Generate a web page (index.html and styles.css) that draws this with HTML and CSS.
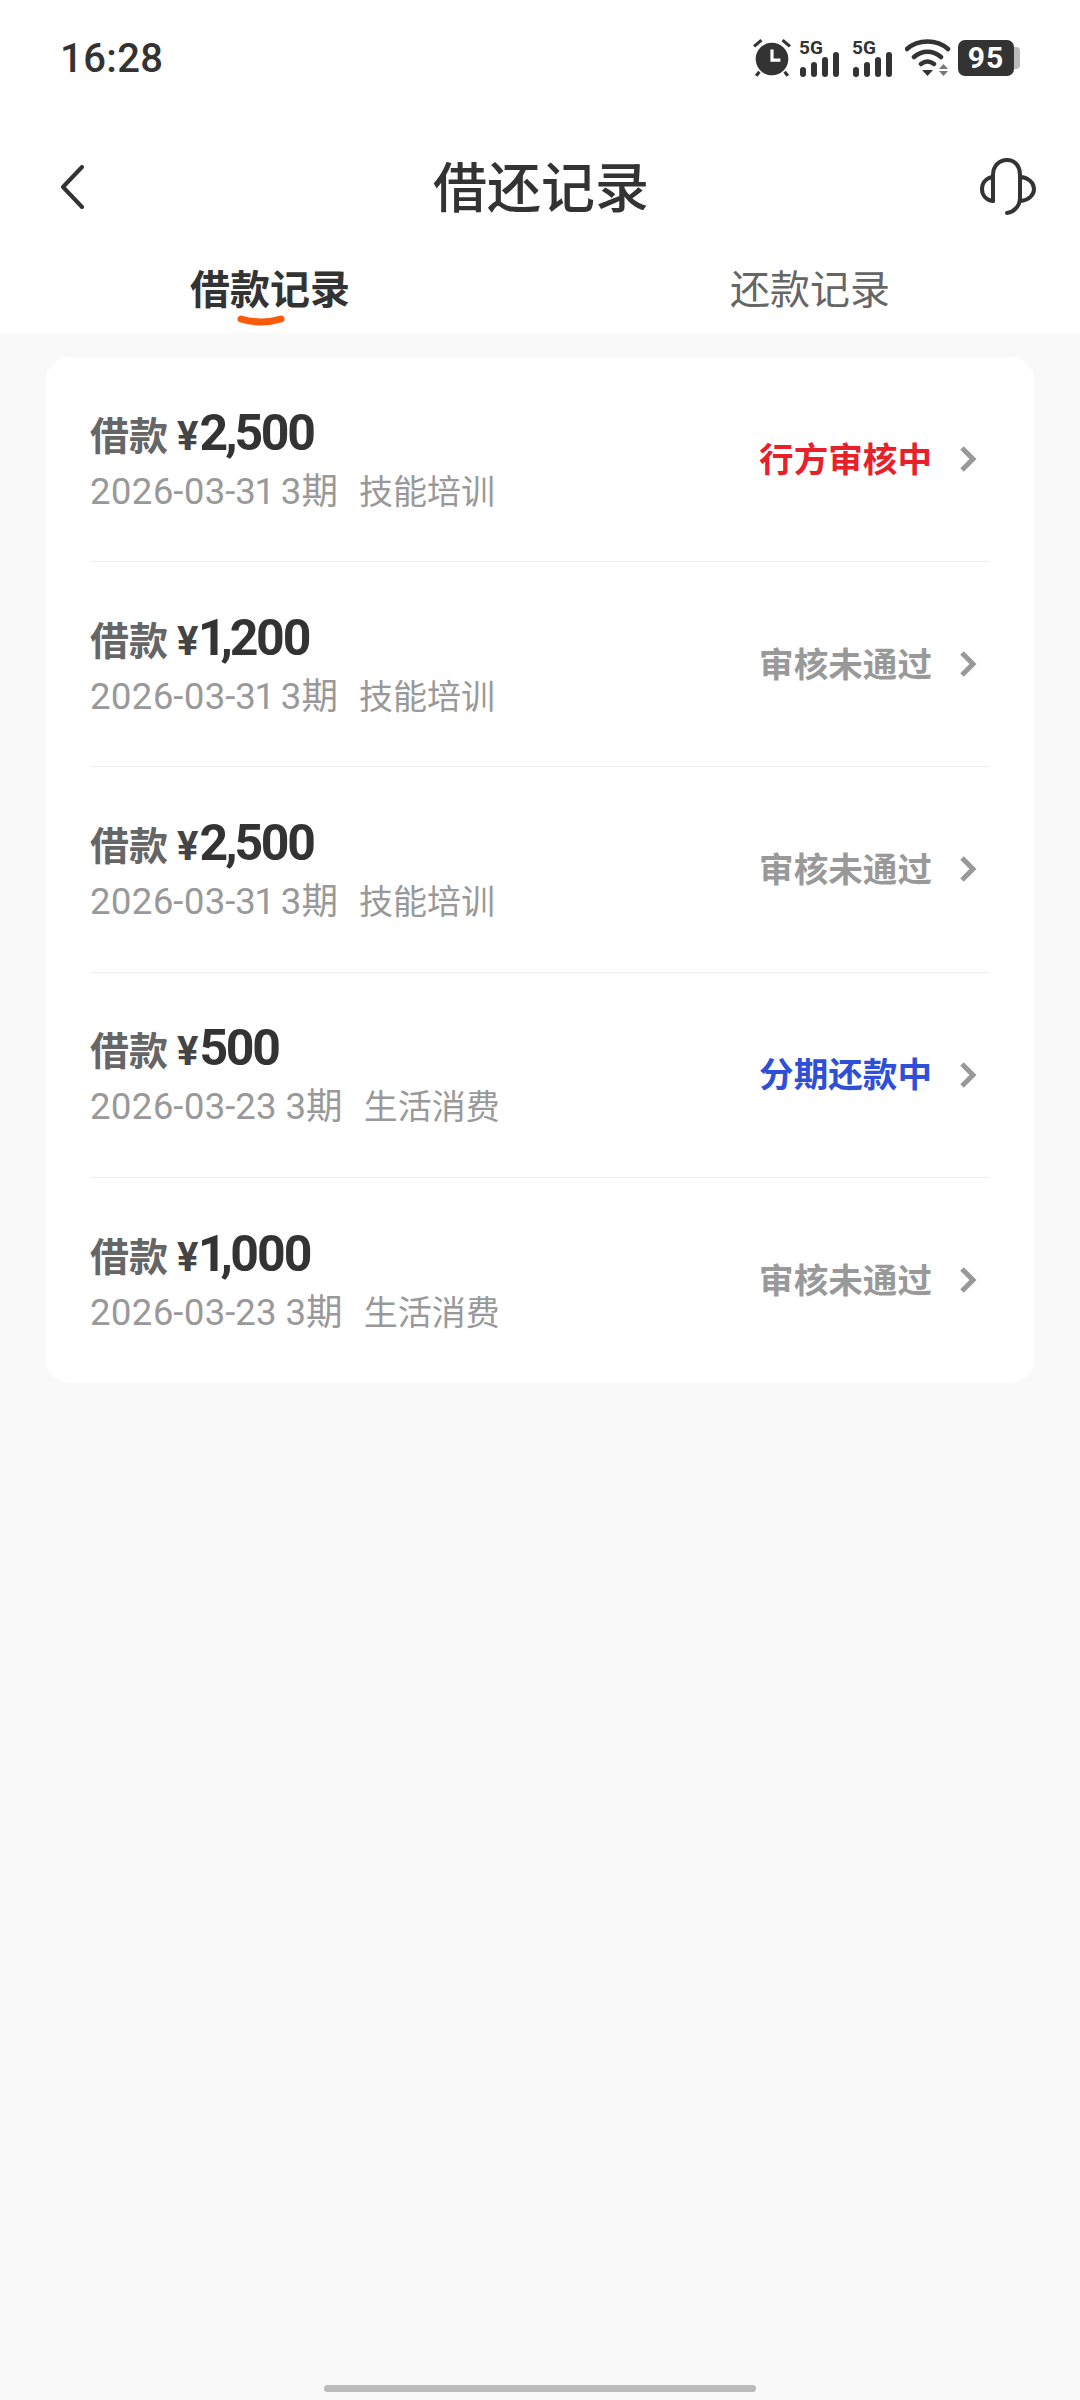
FILE: index.html
```html
<!DOCTYPE html>
<html lang="zh-CN">
<head>
    <meta charset="UTF-8">
    <meta name="viewport" content="width=device-width, initial-scale=1.0">
    <title>借还记录</title>
    <link rel="stylesheet" href="styles.css">
</head>
<body>
    <div class="top">
        <div class="statusbar">
            <span class="time">16:28</span>
            <div class="status-icons">
                <svg class="ic-alarm" width="40" height="40" viewBox="0 0 38 38">
                    <circle cx="19" cy="20" r="15.5" fill="#333"/>
                    <path d="M19 11v10h8" fill="none" stroke="#fff" stroke-width="3"/>
                    <path d="M2 8l7-6M36 8l-7-6M7 32l-3 4M31 32l3 4" stroke="#333" stroke-width="3" fill="none"/>
                </svg>
                <div class="sig">
                    <span class="sig-label">5G</span>
                    <svg width="42" height="25" viewBox="0 0 42 25">
                        <rect x="1" y="15" width="6" height="10" rx="3" fill="#333"/>
                        <rect x="12" y="10" width="6" height="15" rx="3" fill="#333"/>
                        <rect x="23" y="5" width="6" height="20" rx="3" fill="#333"/>
                        <rect x="34" y="0" width="6" height="25" rx="3" fill="#333"/>
                    </svg>
                </div>
                <div class="sig">
                    <span class="sig-label">5G</span>
                    <svg width="42" height="25" viewBox="0 0 42 25">
                        <rect x="1" y="15" width="6" height="10" rx="3" fill="#333"/>
                        <rect x="12" y="10" width="6" height="15" rx="3" fill="#333"/>
                        <rect x="23" y="5" width="6" height="20" rx="3" fill="#333"/>
                        <rect x="34" y="0" width="6" height="25" rx="3" fill="#333"/>
                    </svg>
                </div>
                <svg width="46" height="38" viewBox="0 0 46 38">
                    <path d="M2 10C13 0 32 0 43 10M9 18C17 11 28 11 36 18M16 25C20 22 25 22 29 25" fill="none" stroke="#333" stroke-width="4.5" stroke-linecap="round"/>
                    <path d="M17 31h11l-5.500 6z" fill="#333"/>
                    <path d="M34 30l4.500-5 4.500 5zM34 32h9l-4.500 5z" fill="#777"/>
                </svg>
                <div class="battery">
                    <span class="battery-num">95</span>
                    <span class="battery-cap"></span>
                </div>
            </div>
        </div>

        <div class="navbar">
            <svg class="nav-back" width="26" height="44" viewBox="0 0 26 44">
                <path d="M22 2L3 22l19 20" fill="none" stroke="#333" stroke-width="4" stroke-linecap="round" stroke-linejoin="round"/>
            </svg>
            <h1 class="nav-title">借还记录</h1>
            <svg class="nav-help" width="56" height="58" viewBox="0 0 56 58">
                <path d="M13 43V17C13 8 19 2 27 2s13 6 13 15v23c0 8-6 14-13 15" fill="none" stroke="#333" stroke-width="4" stroke-linecap="round"/>
                <path d="M13 19C6 20 2 25 2 31s4 11 11 12zM41 19c8 1 13 6 13 12s-5 11-13 12" fill="none" stroke="#333" stroke-width="4" stroke-linejoin="round"/>
            </svg>
        </div>

        <div class="tabs">
            <div class="tab tab-active">
                借款记录
                <svg class="tab-mark" width="48" height="12" viewBox="0 0 48 12">
                    <path d="M4 4Q24 10 44 4" fill="none" stroke="#fa5a0a" stroke-width="7" stroke-linecap="round"/>
                </svg>
            </div>
            <div class="tab">还款记录</div>
        </div>
    </div>

    <div class="content">
        <div class="card">
            <div class="row">
                <div class="row-info">
                    <div class="amount"><span class="amount-label">借款</span><span class="amount-sign">¥</span><span class="amount-num">2,500</span></div>
                    <div class="meta"><span class="meta-date">2026-03-31 3期</span><span>技能培训</span></div>
                </div>
                <span class="state state-red">行方审核中</span>
                <svg class="chevron" width="18" height="28" viewBox="0 0 18 28"><path d="M3 3l11 11L3 25" fill="none" stroke="#999" stroke-width="5"/></svg>
            </div>
            <div class="row">
                <div class="row-info">
                    <div class="amount"><span class="amount-label">借款</span><span class="amount-sign">¥</span><span class="amount-num">1,200</span></div>
                    <div class="meta"><span class="meta-date">2026-03-31 3期</span><span>技能培训</span></div>
                </div>
                <span class="state">审核未通过</span>
                <svg class="chevron" width="18" height="28" viewBox="0 0 18 28"><path d="M3 3l11 11L3 25" fill="none" stroke="#999" stroke-width="5"/></svg>
            </div>
            <div class="row">
                <div class="row-info">
                    <div class="amount"><span class="amount-label">借款</span><span class="amount-sign">¥</span><span class="amount-num">2,500</span></div>
                    <div class="meta"><span class="meta-date">2026-03-31 3期</span><span>技能培训</span></div>
                </div>
                <span class="state">审核未通过</span>
                <svg class="chevron" width="18" height="28" viewBox="0 0 18 28"><path d="M3 3l11 11L3 25" fill="none" stroke="#999" stroke-width="5"/></svg>
            </div>
            <div class="row">
                <div class="row-info">
                    <div class="amount"><span class="amount-label">借款</span><span class="amount-sign">¥</span><span class="amount-num">500</span></div>
                    <div class="meta"><span class="meta-date">2026-03-23 3期</span><span>生活消费</span></div>
                </div>
                <span class="state state-blue">分期还款中</span>
                <svg class="chevron" width="18" height="28" viewBox="0 0 18 28"><path d="M3 3l11 11L3 25" fill="none" stroke="#999" stroke-width="5"/></svg>
            </div>
            <div class="row">
                <div class="row-info">
                    <div class="amount"><span class="amount-label">借款</span><span class="amount-sign">¥</span><span class="amount-num">1,000</span></div>
                    <div class="meta"><span class="meta-date">2026-03-23 3期</span><span>生活消费</span></div>
                </div>
                <span class="state">审核未通过</span>
                <svg class="chevron" width="18" height="28" viewBox="0 0 18 28"><path d="M3 3l11 11L3 25" fill="none" stroke="#999" stroke-width="5"/></svg>
            </div>
        </div>
        <div class="home-bar"></div>
    </div>
</body>
</html>
```

FILE: styles.css
```css
* {
    box-sizing: border-box;
}
body {
    margin: 0;
    width: 1080px;
    height: 2400px;
    display: flex;
    flex-direction: column;
    background-color: #f9f9f9;
    color: #333;
    font-family: Roboto, "Noto Sans CJK SC", sans-serif;
    overflow: hidden;
}
.top {
    height: 333px;
    background-color: #fff;
}
.statusbar {
    height: 114px;
    padding: 2px 60px 0 60px;
    display: flex;
    align-items: center;
    justify-content: space-between;
}
.time {
    font-size: 40px;
    font-weight: 500;
    letter-spacing: 0.4px;
}
.status-icons {
    display: flex;
    align-items: center;
    gap: 6px;
}
.ic-alarm {
    margin-right: 1px;
}
.sig {
    width: 47px;
    display: flex;
    flex-direction: column;
    align-items: flex-start;
}
.sig svg {
    display: block;
    margin-top: -5px;
}
.sig-label {
    font-size: 19px;
    font-weight: 700;
    line-height: 18px;
}
.battery {
    display: flex;
    align-items: center;
    margin-left: 1px;
}
.battery-num {
    width: 56px;
    height: 36px;
    background-color: #333;
    border-radius: 7px;
    color: #fff;
    font-size: 30px;
    font-weight: 700;
    line-height: 36px;
    text-align: center;
    letter-spacing: 1px;
}
.battery-cap {
    width: 6px;
    height: 22px;
    background-color: #bbb;
    border-radius: 0 4px 4px 0;
}
.navbar {
    height: 146px;
    padding: 0 44px 0 60px;
    display: flex;
    align-items: center;
    justify-content: space-between;
}
.nav-title {
    margin: 6px 0 0 16px;
    font-size: 54px;
    font-weight: 500;
    line-height: 1;
}
.tabs {
    display: flex;
    padding-top: 6px;
}
.tab {
    position: relative;
    width: 540px;
    font-size: 40px;
    line-height: 50px;
    text-align: center;
    color: #666;
}
.tab-active {
    color: #333;
    font-weight: 700;
}
.tab-mark {
    position: absolute;
    left: 237px;
    top: 49px;
}
.content {
    flex: 1;
    padding: 24px 46px 0;
    display: flex;
    flex-direction: column;
}
.card {
    background-color: #fff;
    border-radius: 24px;
    padding: 0 44px;
}
.row {
    height: 205.2px;
    display: flex;
    align-items: center;
    border-bottom: 1px solid #eee;
}
.row:last-child {
    border-bottom: none;
}
.row-info {
    flex: 1;
    padding-bottom: 2px;
}
.amount {
    display: flex;
    align-items: baseline;
    height: 62px;
    margin-bottom: 5px;
    line-height: 62px;
}
.amount-label {
    font-size: 39px;
    font-weight: 700;
    color: #666;
}
.amount-sign {
    margin-left: 9px;
    font-size: 40px;
    font-weight: 700;
    color: #444;
}
.amount-num {
    margin-left: 1px;
    font-size: 50px;
    font-weight: 700;
    letter-spacing: -3px;
    font-variant-numeric: proportional-nums;
}
.meta {
    display: flex;
    gap: 21px;
    font-size: 34px;
    line-height: 46px;
    color: #999;
}
.meta-date {
    font-size: 36.6px;
    font-variant-numeric: proportional-nums;
}
.state {
    padding-bottom: 5px;
    font-size: 34.6px;
    font-weight: 700;
    color: #999;
}
.state-red {
    color: #e8202a;
}
.state-blue {
    color: #2f4fd8;
}
.chevron {
    margin: 0 13px 0 27px;
}
.home-bar {
    width: 432px;
    height: 7px;
    margin: auto auto 8px;
    background-color: #bbb;
    border-radius: 4px;
}
```
